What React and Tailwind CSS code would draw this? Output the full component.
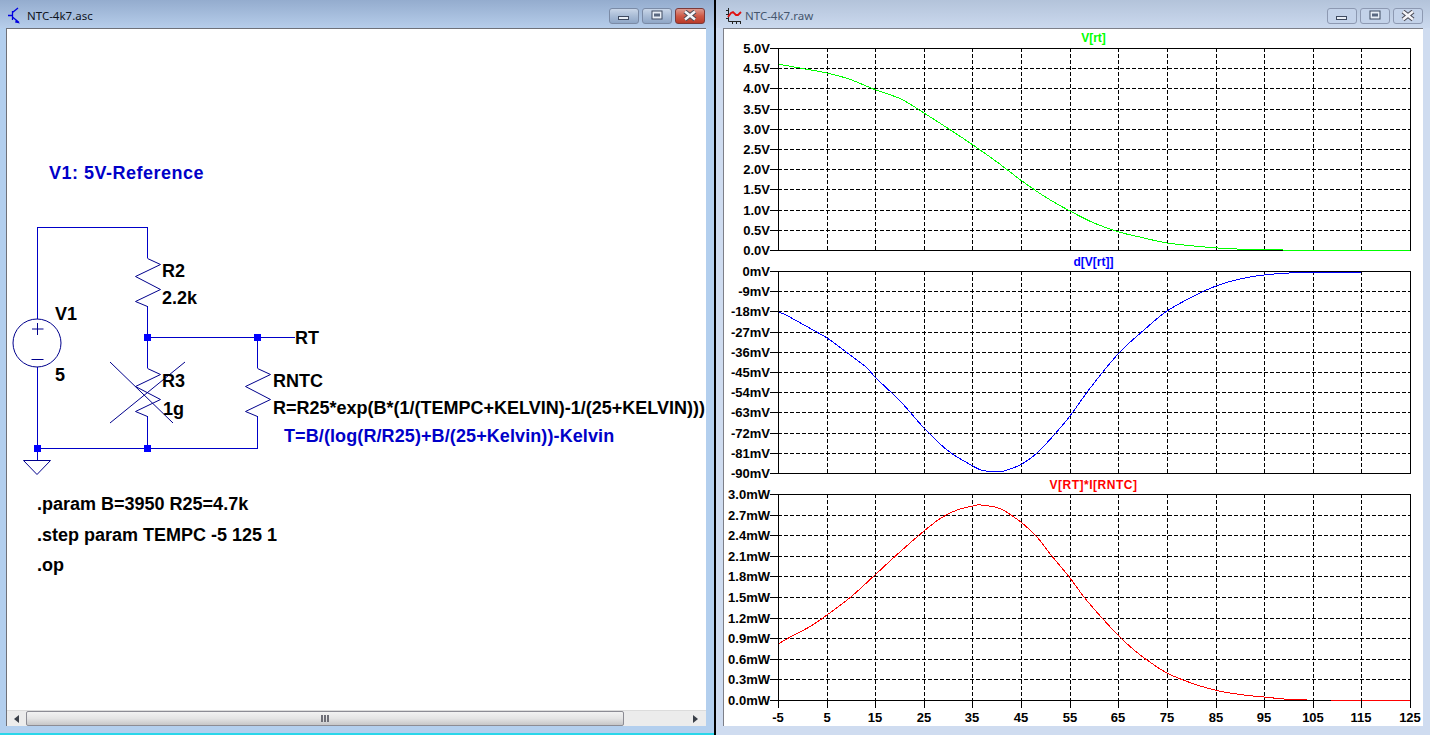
const SANS = "font-['Liberation_Sans',Arial,sans-serif]";

const X_TICKS = [
    [779, '-5'], [828, '5'], [876, '15'], [925, '25'], [973, '35'], [1022, '45'], [1071, '55'],
    [1119, '65'], [1168, '75'], [1217, '85'], [1265, '95'], [1314, '105'], [1362, '115'], [1411, '125'],
];

const PLOTS = [
    {
        title: 'V[rt]',
        titleY: 42,
        color: '#00ff00',
        ticks: [
            [48, '5.0V'], [68, '4.5V'], [88, '4.0V'], [109, '3.5V'], [129, '3.0V'], [149, '2.5V'],
            [169, '2.0V'], [189, '1.5V'], [210, '1.0V'], [230, '0.5V'], [250, '0.0V'],
        ],
        curve: [[779, 64], [795, 67], [828, 73], [850, 79], [877, 90], [902, 99], [925, 113], [950, 129], [974, 145], [998, 162], [1023, 181], [1048, 198], [1071, 211], [1095, 223], [1120, 232], [1145, 238], [1168, 243], [1195, 246], [1219, 248], [1250, 249.5], [1284, 250]],
        tail: [1284, 250, 1411],
    },
    {
        title: 'd[V[rt]]',
        titleY: 266,
        color: '#0000ff',
        ticks: [
            [271, '0mV'], [291, '-9mV'], [311, '-18mV'], [332, '-27mV'], [352, '-36mV'], [372, '-45mV'],
            [392, '-54mV'], [412, '-63mV'], [433, '-72mV'], [453, '-81mV'], [473, '-90mV'],
        ],
        curve: [[779, 313], [785, 314], [805, 325], [828, 338], [847, 352], [867, 367], [877, 378], [902, 402], [925, 428], [948, 450], [965, 461], [982, 470], [996, 471.5], [1005, 471], [1023, 464], [1038, 453], [1055, 435], [1071, 416], [1092, 387], [1120, 353], [1145, 330], [1168, 311], [1195, 296], [1217, 286], [1241, 279], [1265, 275], [1290, 273], [1314, 272.5]],
        tail: [1314, 272, 1362],
    },
    {
        title: 'V[RT]*I[RNTC]',
        titleY: 489,
        color: '#ff0000',
        tracking: 'tracking-[0.5px]',
        ticks: [
            [494, '3.0mW'], [515, '2.7mW'], [535, '2.4mW'], [556, '2.1mW'], [576, '1.8mW'], [597, '1.5mW'],
            [618, '1.2mW'], [638, '0.9mW'], [659, '0.6mW'], [679, '0.3mW'], [700, '0.0mW'],
        ],
        curve: [[779, 644], [795, 635], [812, 626], [828, 615], [853, 596], [877, 574], [902, 551], [925, 531], [942, 518], [958, 510], [974, 506], [982, 505], [1002, 509], [1023, 523], [1038, 537], [1052, 555], [1071, 578], [1085, 597], [1103, 618], [1120, 636], [1135, 650], [1148, 660], [1168, 673], [1195, 684], [1220, 691], [1245, 695], [1265, 697], [1292, 699.5], [1332, 700.5]],
        tail: [1332, 700, 1411],
    },
];

// catmull-rom through the traced points, so the traces don't look like straight segments
const smoothPath = (pts) => {
    let d = `M${pts[0][0]} ${pts[0][1]}`;
    for (let i = 0; i < pts.length - 1; i++) {
        const p0 = pts[i - 1] || pts[i];
        const p1 = pts[i];
        const p2 = pts[i + 1];
        const p3 = pts[i + 2] || p2;
        const c1x = p1[0] + (p2[0] - p0[0]) / 6;
        const c1y = p1[1] + (p2[1] - p0[1]) / 6;
        const c2x = p2[0] - (p3[0] - p1[0]) / 6;
        const c2y = p2[1] - (p3[1] - p1[1]) / 6;
        d += ` C${c1x} ${c1y} ${c2x} ${c2y} ${p2[0]} ${p2[1]}`;
    }
    return d;
};

const RESISTOR = (x, y) =>
    `${x},${y} ${x + 13},${y + 6} ${x - 12},${y + 18} ${x + 13},${y + 31} ${x - 12},${y + 43} ${x},${y + 48}`;

const SCHEMATIC_LABELS = [
    [55, 320, 'V1'], [55, 381, '5'], [162, 277, 'R2'], [162, 304, '2.2k'], [162, 387, 'R3'], [163, 415, '1g'],
    [295, 344, 'RT'], [273, 387, 'RNTC'], [273, 414, 'R=R25*exp(B*(1/(TEMPC+KELVIN)-1/(25+KELVIN)))'],
    [37, 510, '.param B=3950 R25=4.7k'], [37, 541, '.step param TEMPC -5 125 1'], [37, 571, '.op'],
];

const CaptionButton = ({ kind, active }) => {
    const tone = kind === 'close' && active
        ? 'border-[#7c3a3a] bg-gradient-to-b from-[#dc9a90] via-[#cf5a48] to-[#b93a28]'
        : active
            ? 'border-[#7b8ba6] bg-gradient-to-b from-[#c9d6e8] via-[#a9bcd6] to-[#8fa6c6]'
            : 'border-[#8d99b2] bg-[#c3d2e9]';
    return (
        <div className={`w-[30px] h-[16px] border rounded-[3px] flex items-center justify-center ${tone}`}>
            <svg width="18" height="12" viewBox="0 0 18 12">
                {kind === 'min' && <rect x="3.5" y="6.5" width="10" height="3" fill="#e8eef6" stroke="#3e4a60" />}
                {kind === 'max' && (
                    <>
                        <rect x="4" y="1" width="10" height="8" fill="#e8eef6" stroke="#3e4a60" />
                        <rect x="6" y="3.5" width="6" height="3" fill="#5a6880" />
                    </>
                )}
                {kind === 'close' && (
                    <>
                        <path d="M4 1.5 L14 9.5 M14 1.5 L4 9.5" stroke="#4a4a55" strokeWidth="4.5" />
                        <path d="M4 1.5 L14 9.5 M14 1.5 L4 9.5" stroke="#f4f4f8" strokeWidth="2.5" />
                    </>
                )}
            </svg>
        </div>
    );
};

const TitleBar = ({ icon, title, active }) => (
    <div className={`h-[28px] flex items-start ${active ? 'bg-gradient-to-b from-[#94acce] to-[#b6cdea]' : 'bg-gradient-to-b from-[#b3c3da] to-[#cbd9ee]'}`}>
        <div className={`${active ? 'w-[27px]' : 'w-[29px]'} h-full shrink-0`}>{icon}</div>
        <span className={`mt-[8px] text-[11.5px] leading-[16px] font-['Noto_Sans',sans-serif] ${active ? 'text-[#10141c]' : 'text-[#45566e]'}`}>
            {title}
        </span>
        <div className={`ml-auto mt-[8px] flex gap-[3px] ${active ? 'mr-[9px]' : 'mr-[7px]'}`}>
            <CaptionButton kind="min" active={active} />
            <CaptionButton kind="max" active={active} />
            <CaptionButton kind="close" active={active} />
        </div>
    </div>
);

const TransistorIcon = () => (
    <svg width="27" height="28" viewBox="0 0 27 28">
        <path d="M12.5 11 V20 M8 15.5 H12.5 M12.5 12.5 L18 8 M12.5 17 L19 22.5" stroke="#0000e0" strokeWidth="1.3" fill="none" />
        <path d="M16 19.5 L20 23.5 L15 22.5 Z" fill="#0000e0" />
    </svg>
);

const ChartIcon = () => (
    <svg width="29" height="28" viewBox="0 0 29 28">
        <path d="M12.5 8 V21.5 H25 M10 10.5 H12.5 M10 14.5 H12.5 M10 18.5 H12.5 M16.5 21.5 V24 M20.5 21.5 V24 M24.5 21.5 V24" stroke="#222" strokeWidth="1" fill="none" />
        <path d="M12 17 L15 13 L17 12 L20 15 L22 15 L25 12" stroke="#e01010" strokeWidth="1.8" fill="none" />
    </svg>
);

const Scrollbar = () => (
    <div className="h-[16px] flex bg-[#ececec] border-t border-[#dcdcdc]">
        <div className="w-[19px] flex items-center justify-center">
            <svg width="6" height="8" viewBox="0 0 6 8"><path d="M5 0 V8 L0 4 Z" fill="#3a3f48" /></svg>
        </div>
        <div className="w-[598px] h-[15px] border border-[#8c8c94] rounded-[2px] bg-gradient-to-b from-[#f2f2f2] via-[#e4e4e4] to-[#c6c6c8] flex items-center justify-center">
            <div className="flex gap-[1px]">
                <div className="w-[2px] h-[7px] bg-[#6e6e76]" />
                <div className="w-[2px] h-[7px] bg-[#6e6e76]" />
                <div className="w-[2px] h-[7px] bg-[#6e6e76]" />
            </div>
        </div>
        <div className="flex-1 flex items-center justify-end pr-[7px]">
            <svg width="6" height="8" viewBox="0 0 6 8"><path d="M0 0 V8 L5 4 Z" fill="#3a3f48" /></svg>
        </div>
    </div>
);

const Schematic = () => (
    <svg width="699" height="681" viewBox="7 29 699 681" className={`block ${SANS}`}>
        <g fill="none" stroke="#0000c8" strokeWidth="1" shapeRendering="crispEdges">
            <polyline points="37.5,319 37.5,227.5 147.5,227.5 147.5,258" />
            <polyline points="147.5,306 147.5,368" />
            <polyline points="147.5,337.5 295,337.5" />
            <polyline points="257.5,337.5 257.5,368" />
            <polyline points="37.5,367 37.5,460" />
            <polyline points="37.5,448.5 257.5,448.5 257.5,416" />
            <polyline points="147.5,416 147.5,448" />
        </g>
        <g fill="none" stroke="#00008c" strokeWidth="1">
            <polyline points={RESISTOR(147.5, 258.5)} />
            <polyline points={RESISTOR(147.5, 368.5)} />
            <polyline points={RESISTOR(257.5, 368.5)} />
            <path d="M110 362 L173 423 M185 362 L110 423" />
            <circle cx="37" cy="343" r="24" />
            <path d="M37.5 323 V335 M32 329 H43.5 M31.5 359.5 H43.5" />
            <path d="M23.5 460.5 H50.5 L37 474.5 Z" />
        </g>
        <g fill="#0000ff">
            <rect x="144" y="334" width="7" height="7" />
            <rect x="254" y="334" width="7" height="7" />
            <rect x="34" y="445" width="7" height="7" />
            <rect x="144" y="445" width="7" height="7" />
        </g>
        <g className="font-bold text-[18px]" fill="#000">
            {SCHEMATIC_LABELS.map(([x, y, label]) => (
                <text key={label} x={x} y={y}>{label}</text>
            ))}
        </g>
        <g className="font-bold text-[18px]" fill="#0000c8">
            <text x="49" y="179" className="tracking-[0.5px]">V1: 5V-Reference</text>
            <text x="284" y="442" className="tracking-[0.1px]">T=B/(log(R/R25)+B/(25+Kelvin))-Kelvin</text>
        </g>
    </svg>
);

const Plots = () => (
    <svg width="699" height="697" viewBox="725 29 699 697" className={`block ${SANS}`}>
        {PLOTS.map((plot) => {
            const top = plot.ticks[0][0];
            const bottom = plot.ticks[plot.ticks.length - 1][0];
            return (
                <g key={plot.title}>
                    <text x="1094.5" y={plot.titleY} textAnchor="middle" fill={plot.color} className={`font-bold text-[12px] ${plot.tracking || ''}`}>
                        {plot.title}
                    </text>
                    <g stroke="#000" strokeWidth="1" shapeRendering="crispEdges">
                        {X_TICKS.slice(1, -1).map(([x]) => (
                            <line key={x} x1={x + 0.5} x2={x + 0.5} y1={top} y2={bottom} strokeDasharray="4 2" />
                        ))}
                        {plot.ticks.slice(1, -1).map(([y]) => (
                            <line key={y} x1="779" x2="1411" y1={y + 0.5} y2={y + 0.5} strokeDasharray="4 2" />
                        ))}
                    </g>
                    <path d={smoothPath(plot.curve)} fill="none" stroke={plot.color} strokeWidth="1" shapeRendering="crispEdges" />
                    <rect x="779.5" y={top + 0.5} width="632" height={bottom - top} fill="none" stroke="#000" shapeRendering="crispEdges" />
                    {plot.tail && (
                        <line x1={plot.tail[0]} x2={plot.tail[2]} y1={plot.tail[1] + 0.5} y2={plot.tail[1] + 0.5} stroke={plot.color} shapeRendering="crispEdges" />
                    )}
                    {plot.ticks.map(([y, label]) => (
                        <g key={label}>
                            <line x1="771" x2="779" y1={y + 0.5} y2={y + 0.5} stroke="#000" shapeRendering="crispEdges" />
                            <text x="771" y={y + 5} textAnchor="end" className="font-bold text-[13px]" fill="#000">{label}</text>
                        </g>
                    ))}
                </g>
            );
        })}
        {X_TICKS.map(([x, label]) => (
            <g key={x}>
                <line x1={x + 0.5} x2={x + 0.5} y1="700" y2="708" stroke="#000" shapeRendering="crispEdges" />
                <text x={x} y="722" textAnchor="middle" className="font-bold text-[13px]" fill="#000">{label}</text>
            </g>
        ))}
    </svg>
);

const App = () => (
    <div className="w-[1430px] h-[735px] flex overflow-hidden">
        {/* Schematic window */}
        <div className="w-[714px] h-full flex flex-col bg-[#b3cfee]">
            <TitleBar icon={<TransistorIcon />} title="NTC-4k7.asc" active />
            <div className="flex pl-[6px] pr-[8px] h-[698px]">
                <div className="w-[700px] h-full border-l border-t border-[#6f7178] bg-white overflow-hidden">
                    <Schematic />
                    <Scrollbar />
                </div>
            </div>
            <div className="flex-1" />
            <div className="h-[2px] bg-[#2bd6ea]" />
        </div>

        {/* Divider */}
        <div className="w-[2px] h-full bg-black" />

        {/* Waveform window */}
        <div className="w-[714px] h-full flex flex-col bg-[#cfdcf0]">
            <TitleBar icon={<ChartIcon />} title="NTC-4k7.raw" />
            <div className="flex pl-[7px] pr-[7px] h-[698px]">
                <div className="w-[700px] h-full border-l border-t border-[#7d7f88] bg-white overflow-hidden">
                    <Plots />
                </div>
            </div>
        </div>
    </div>
);

export default App;
